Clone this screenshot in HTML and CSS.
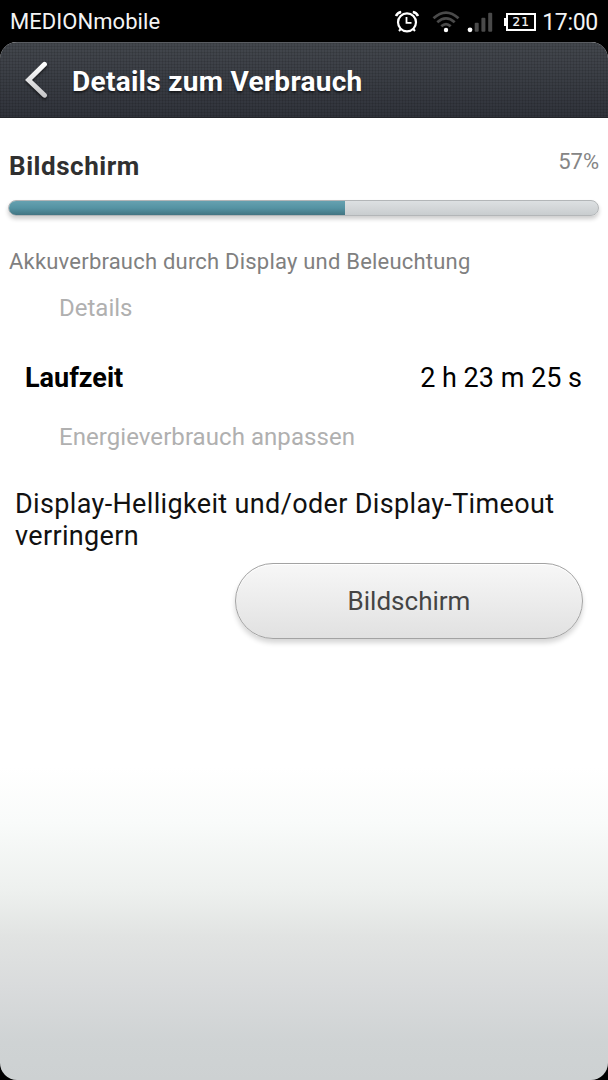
FILE: index.html
```html
<!DOCTYPE html>
<html lang="de">
<head>
  <meta charset="UTF-8" />
  <meta name="viewport" content="width=device-width, initial-scale=1.0" />
  <title>Details zum Verbrauch</title>
  <link rel="stylesheet" href="styles.css">
</head>
<body>

  <!-- Status bar -->
  <div class="status-bar">
    <span class="carrier">MEDIONmobile</span>
    <div class="status-icons">
      <svg class="icon-alarm" width="26" height="24" viewBox="0 0 26 24" fill="none" stroke="#fff">
        <circle cx="13" cy="12.3" r="9" stroke-width="2.2" />
        <path d="M12.5 7v5.8H17.5" stroke-width="1.8" />
        <path d="M2 6Q3.5 2.5 7.2 2M24 6Q22.5 2.5 18.8 2" stroke-width="2.6" />
        <path d="M7.2 18.5L5 21M18.8 18.5L21 21" stroke-width="2" />
      </svg>
      <svg class="icon-wifi" width="28" height="24" viewBox="0 0 28 24" fill="none" stroke="#4a4a4a" stroke-width="2.8">
        <path d="M1.5 8.2Q14 -3 26.5 8.2" />
        <path d="M5.3 12.2Q14 4.5 22.7 12.2" />
        <path d="M9.3 16.2Q14 12 18.7 16.2" />
        <circle cx="14" cy="20" r="2.2" fill="#fff" stroke="none" />
      </svg>
      <svg class="icon-signal" width="26" height="22" viewBox="0 0 26 22" fill="#4a4a4a">
        <circle cx="3" cy="18.8" r="2.4" fill="#fff" />
        <rect x="7.7" y="11.8" width="4" height="9" rx="1" />
        <rect x="14.4" y="6.8" width="4" height="14" rx="1" />
        <rect x="21.2" y="1.8" width="4" height="19" rx="1" />
      </svg>
      <div class="battery"><span>21</span></div>
      <span class="clock">17:00</span>
    </div>
  </div>

  <div class="screen">
    <header>
      <svg class="back" width="24" height="40" viewBox="0 0 24 40" fill="none">
        <defs>
          <linearGradient id="arrow" x1="0" y1="0" x2="0" y2="1">
            <stop offset="0" stop-color="#fff" />
            <stop offset="1" stop-color="#c8c8ca" />
          </linearGradient>
        </defs>
        <path d="M21.5 4.3L5.5 20L21.5 35.3" stroke="url(#arrow)" stroke-width="4.8" stroke-linecap="round" />
      </svg>
      <h1>Details zum Verbrauch</h1>
    </header>

    <main>
      <!-- Usage -->
      <section class="usage">
        <div class="usage-head">
          <h2>Bildschirm</h2>
          <span class="percent">57%</span>
        </div>
        <div class="progress">
          <div class="progress-fill" style="width: 57%"></div>
        </div>
        <p class="description">Akkuverbrauch durch Display und Beleuchtung</p>
      </section>

      <h3 class="label-details">Details</h3>
      <div class="row">
        <strong>Laufzeit</strong>
        <span class="duration">2 h 23 m 25 s</span>
      </div>

      <h3 class="label-adjust">Energieverbrauch anpassen</h3>
      <p class="hint">Display-Helligkeit und/oder Display-Timeout verringern</p>
      <button class="screen-button">Bildschirm</button>
    </main>
  </div>

</body>
</html>
```

FILE: styles.css
```css
*, *::before, *::after {
  box-sizing: border-box;
}

html, body {
  margin: 0;
  padding: 0;
  height: 100%;
  background-color: #000;
  font-family: Roboto, sans-serif;
  overflow: hidden;
}

body {
  display: flex;
  flex-direction: column;
}

h1, h2, h3, p {
  margin: 0;
  font-weight: 400;
}

.status-bar {
  height: 42px;
  display: flex;
  justify-content: space-between;
  align-items: center;
  padding: 2px 10px 0 10px;
  color: #f4f4f4;
  font-size: 22px;
}

.carrier {
  padding-bottom: 2px;
  letter-spacing: 0.05px;
}

.status-icons {
  display: flex;
  align-items: center;
}

.icon-alarm {
  margin-right: 12px;
}

.icon-wifi {
  margin-right: 7px;
}

.icon-signal {
  margin-right: 13px;
}

.battery {
  position: relative;
  width: 30px;
  height: 18px;
  border: 2px solid #fff;
  margin-right: 6px;
  display: flex;
  align-items: center;
  justify-content: center;
  font-family: 'DejaVu Sans', sans-serif;
  font-size: 12px;
  letter-spacing: 1px;
  line-height: 1;
  -webkit-text-stroke: 0.2px #fff;
}

.battery::before {
  content: '';
  position: absolute;
  left: -4px;
  top: 3px;
  width: 3px;
  height: 8px;
  background: #fff;
}

.clock {
  font-size: 23px;
  letter-spacing: -0.3px;
}

.screen {
  flex: 1;
  display: flex;
  flex-direction: column;
  border-radius: 17px;
  overflow: hidden;
  background: linear-gradient(#fff 0, #fff 725px, #f9fbfa 780px, #edf0ee 850px, #e1e3e2 895px, #d9dbdc 945px, #cfd3d4 1000px, #cdd1d2 100%);
}

header {
  height: 76px;
  display: flex;
  align-items: center;
  padding-left: 23px;
  background:
    repeating-linear-gradient(90deg, rgba(0, 0, 0, 0.1) 0 1px, transparent 1px 3px),
    repeating-linear-gradient(rgba(0, 0, 0, 0.1) 0 1px, transparent 1px 3px),
    linear-gradient(#43474d, #30333b);
  border-top: 1px solid #5a5d62;
  border-bottom: 1px solid #24262b;
}

.back {
  margin-right: 25px;
  filter: drop-shadow(0 2px 1px rgba(0, 0, 0, 0.5));
}

h1 {
  color: #fff;
  font-size: 28px;
  font-weight: 700;
  line-height: 34px;
  padding-top: 3px;
  letter-spacing: 0.28px;
  text-shadow: 0 2px 2px rgba(0, 0, 0, 0.5);
}

main {
  display: flex;
  flex-direction: column;
}

.usage {
  padding: 32px 9px 0;
}

.usage-head {
  display: flex;
  justify-content: space-between;
}

h2 {
  color: #303030;
  font-size: 26px;
  font-weight: 700;
  line-height: 32px;
  letter-spacing: 0.55px;
}

.percent {
  color: #858585;
  font-size: 22px;
  line-height: 24px;
}

.progress {
  height: 16px;
  margin: 18px 0 0 -1px;
  border-radius: 8px;
  overflow: hidden;
  background: linear-gradient(#dde0e2, #c9cdcf);
  border: 1px solid #b3b6b8;
  box-shadow: 0 3px 4px rgba(0, 0, 0, 0.2);
}

.progress-fill {
  height: 16px;
  margin: -1px 0 0;
  background: linear-gradient(#68a3b2, #5593a3 50%, #3f707d);
}

.description {
  margin-top: 33px;
  color: #808080;
  font-size: 22px;
  line-height: 26px;
  letter-spacing: 0.21px;
}

h3 {
  padding-left: 59px;
  color: #b0b0b0;
  font-size: 24px;
  line-height: 28px;
  letter-spacing: 0.06px;
}

.label-details {
  margin-top: 19px;
  letter-spacing: 0;
}

.row {
  display: flex;
  justify-content: space-between;
  margin-top: 40px;
  padding: 0 26px 0 25px;
  color: #000;
  font-size: 27px;
  line-height: 32px;
}

.label-adjust {
  margin-top: 29px;
}

.hint {
  margin-top: 37px;
  padding-left: 15px;
  color: #111;
  font-size: 27px;
  line-height: 32px;
  letter-spacing: 0.35px;
}

.screen-button {
  width: 348px;
  height: 76px;
  margin: 11px 25px 0 auto;
  padding: 0;
  border: 1px solid #a3a3a3;
  border-radius: 38px;
  background: linear-gradient(#f7f7f7, #e1e1e1);
  box-shadow: 0 4px 5px rgba(0, 0, 0, 0.16), inset 0 1px 1px #fff;
  color: #444;
  font-family: inherit;
  font-size: 26px;
}
```
